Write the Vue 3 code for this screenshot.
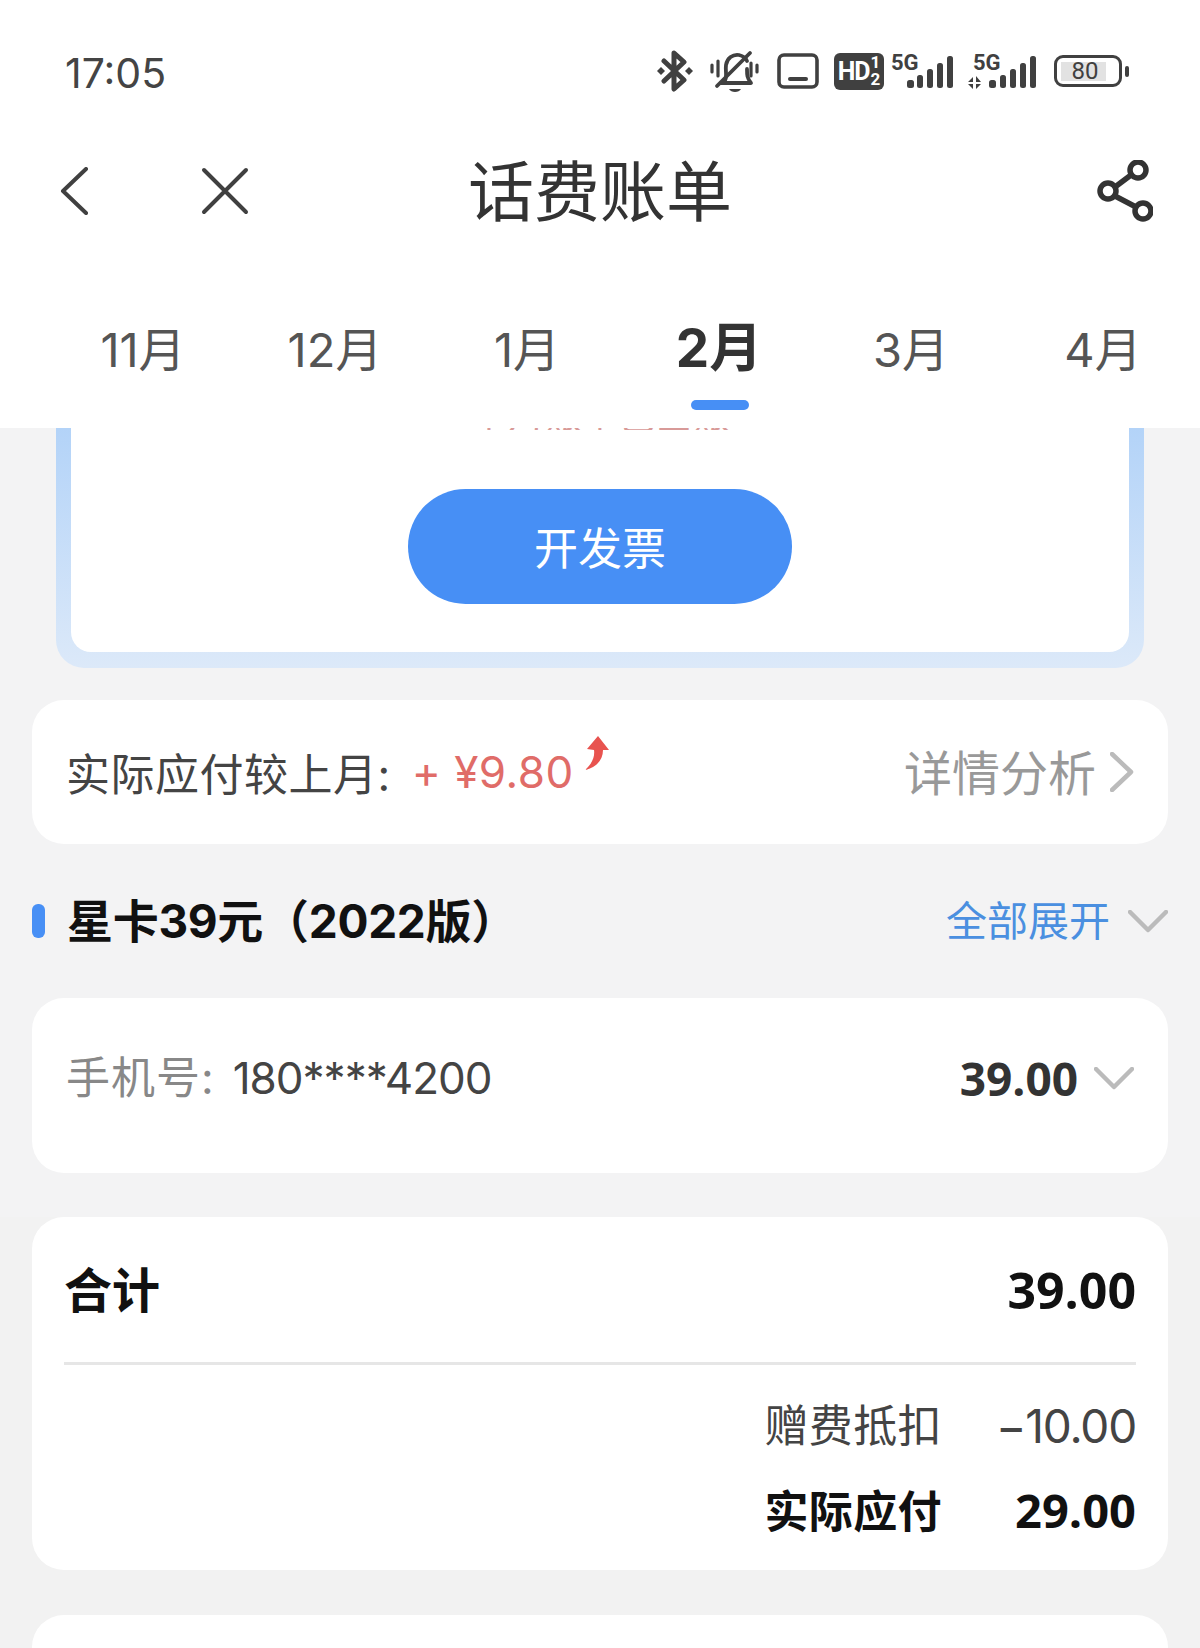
<script setup>
const months = [
  { label: "11月" },
  { label: "12月" },
  { label: "1月" },
  { label: "2月", active: true },
  { label: "3月" },
  { label: "4月" },
]
</script>

<template>
  <div class="page">
    <header class="top">
      <div class="status">
        <span class="time">17:05</span>
        <div class="status-icons">
          <svg class="ic-bt" viewBox="0 0 38 42" width="38" height="42">
            <path d="M8 11 L28 30 L18 39 V3 L28 12 L8 31" fill="none" stroke="#404040" stroke-width="5" stroke-linejoin="round" stroke-linecap="round"/>
            <path d="M1 21 l4 -4 l4 4 l-4 4z M29 21 l4 -4 l4 4 l-4 4z" fill="#404040"/>
          </svg>
          <svg class="ic-bell" viewBox="0 0 49 43" width="49" height="43">
            <path d="M14 32 C18 28 15 22 16 15 C17 8 23 4 29 5 C33 6 36 8 37 11 M37 19 C37 25 37 28 41 33 H11" fill="none" stroke="#404040" stroke-width="3.8" stroke-linejoin="round" stroke-linecap="round"/>
            <path d="M19 39 H31 C29 43 21 43 19 39z" fill="#404040"/>
            <path d="M7 36 L40 3" stroke="#404040" stroke-width="3.8" stroke-linecap="round"/>
            <path d="M2 15 V22 M8 11 V26 M41 13 V26 M47 15 V22" stroke="#404040" stroke-width="3.2" stroke-linecap="round"/>
          </svg>
          <svg class="ic-box" viewBox="0 0 42 36" width="42" height="36">
            <rect x="2" y="2" width="38" height="32" rx="5" fill="none" stroke="#404040" stroke-width="3.6"/>
            <rect x="11" y="24" width="20" height="4" rx="2" fill="#404040"/>
          </svg>
          <div class="hd">
            <span class="hd-big">HD</span>
            <span class="hd-small"><i>1</i><i>2</i></span>
          </div>
          <svg class="ic-sig" viewBox="0 0 64 36" width="64" height="36">
            <text x="0" y="17" class="five-g">5G</text>
            <rect x="16" y="27" width="7" height="8" rx="2.5" fill="#404040"/>
            <rect x="26" y="22" width="6" height="13" rx="2.5" fill="#404040"/>
            <rect x="36" y="16" width="6" height="19" rx="2.5" fill="#404040"/>
            <rect x="46" y="10" width="6" height="25" rx="2.5" fill="#404040"/>
            <rect x="56" y="3" width="6" height="32" rx="2.5" fill="#404040"/>
          </svg>
          <svg class="ic-sig" viewBox="0 0 70 36" width="70" height="36">
            <text x="5" y="17" class="five-g">5G</text>
            <path d="M0 29 H5 V24 Z M0 31 H5 V36 Z M8 23 V29 H13 Z M8 31 V36 L13 31 Z" fill="#404040"/>
            <rect x="21" y="27" width="7" height="8" rx="2.5" fill="#404040"/>
            <rect x="32" y="22" width="6" height="13" rx="2.5" fill="#404040"/>
            <rect x="42" y="16" width="6" height="19" rx="2.5" fill="#404040"/>
            <rect x="52" y="10" width="6" height="25" rx="2.5" fill="#404040"/>
            <rect x="62" y="3" width="6" height="32" rx="2.5" fill="#404040"/>
          </svg>
          <div class="battery">
            <div class="battery-body">
              <span class="battery-fill"></span>
              <span class="battery-num">80</span>
            </div>
            <span class="battery-nub"></span>
          </div>
        </div>
      </div>

      <nav class="nav">
        <svg class="nav-back" viewBox="0 0 30 48" width="30" height="48">
          <path d="M27 2 L4 24 L27 46" fill="none" stroke="#404040" stroke-width="4" stroke-linecap="round" stroke-linejoin="round"/>
        </svg>
        <svg class="nav-close" viewBox="0 0 48 48" width="48" height="48">
          <path d="M3 3 L45 45 M45 3 L3 45" fill="none" stroke="#404040" stroke-width="4" stroke-linecap="round"/>
        </svg>
        <h1 class="nav-title">话费账单</h1>
        <svg class="nav-share" viewBox="0 0 56 62" width="56" height="62">
          <g fill="none" stroke="#333" stroke-width="5.5">
            <circle cx="11" cy="31" r="8"/>
            <circle cx="41" cy="10" r="8"/>
            <circle cx="46" cy="51" r="8"/>
            <path d="M18 27 L34 15 M18 36 L39 47"/>
          </g>
        </svg>
      </nav>

      <div class="tabs">
        <div v-for="m in months" :key="m.label" class="tab" :class="{ active: m.active }">
          <span>{{ m.label }}</span>
          <i v-if="m.active" class="tab-line"></i>
        </div>
      </div>
    </header>

    <main class="content">
      <section class="invoice">
        <div class="invoice-inner">
          <div class="clipped"><span>本月账单已出账</span></div>
          <button class="invoice-btn">开发票</button>
        </div>
      </section>

      <section class="card compare">
        <div class="compare-left">
          <span>实际应付较上月:</span>
          <span class="diff">+ ¥9.80</span>
          <svg class="up" viewBox="0 0 26 36" width="26" height="36">
            <path d="M14 0 L25 14 L19 14 C19 24 12 32 1 34 C8 28 11 21 10 14 L3 13 Z" fill="#e8534f"/>
          </svg>
        </div>
        <div class="compare-right">
          <span>详情分析</span>
          <svg viewBox="0 0 24 40" width="24" height="40">
            <path d="M2 2 L21 20 L2 38" fill="none" stroke="#bbb" stroke-width="4.5" stroke-linecap="round" stroke-linejoin="round"/>
          </svg>
        </div>
      </section>

      <div class="plan">
        <div class="plan-left">
          <i class="plan-bar"></i>
          <h2>星卡39元（2022版）</h2>
        </div>
        <div class="plan-right">
          <span>全部展开</span>
          <svg viewBox="0 0 40 23" width="40" height="23">
            <path d="M2 2 L20 20 L38 2" fill="none" stroke="#bbb" stroke-width="4.5" stroke-linecap="round" stroke-linejoin="round"/>
          </svg>
        </div>
      </div>

      <section class="card phone">
        <div class="phone-left">
          <span class="phone-label">手机号:</span>
          <span class="phone-num">180****4200</span>
        </div>
        <div class="phone-right">
          <b>39.00</b>
          <svg viewBox="0 0 40 23" width="40" height="23">
            <path d="M2 2 L20 20 L38 2" fill="none" stroke="#bbb" stroke-width="4.5" stroke-linecap="round" stroke-linejoin="round"/>
          </svg>
        </div>
      </section>

      <section class="card total">
        <div class="total-head">
          <b class="total-label">合计</b>
          <b class="total-num">39.00</b>
        </div>
        <div class="total-rows">
          <div class="total-row">
            <span class="k">赠费抵扣</span>
            <span class="v">−10.00</span>
          </div>
          <div class="total-row strong">
            <span class="k">实际应付</span>
            <span class="v">29.00</span>
          </div>
        </div>
      </section>

      <section class="card more"></section>
    </main>
  </div>
</template>

<style>
html, body {
  margin: 0;
  background: #f3f3f4;
}
</style>

<style scoped>
.page {
  width: 1200px;
  height: 1648px;
  overflow: hidden;
  background: linear-gradient(#f3f3f4 1217px, #f2f2f2 1217px);
  font-family: "Inter", "Noto Sans CJK SC", "Noto Sans", sans-serif;
  color: #444;
}

.top {
  height: 428px;
  background: #fff;
  position: relative;
  z-index: 1;
}

.status {
  height: 144px;
  box-sizing: border-box;
  padding: 49px 70px 0 65px;
  display: flex;
  justify-content: space-between;
  align-items: flex-start;
}
.time {
  font-size: 41px;
  line-height: 48px;
  color: #444;
}
.status-icons {
  display: flex;
  align-items: center;
  height: 44px;
  margin-right: 1px;
}
.ic-bt { margin-right: 16px; }
.ic-bell { margin-right: 18px; }
.ic-box { margin-right: 15px; }
.ic-sig { margin-left: 7px; overflow: visible; }
.ic-sig + .ic-sig { margin-left: 13px; }
.five-g {
  font-family: "Roboto", sans-serif;
  font-size: 22px;
  font-weight: 700;
  fill: #404040;
}
.hd {
  width: 50px;
  height: 37px;
  background: #404040;
  border-radius: 6px;
  color: #fff;
  display: flex;
  align-items: center;
  justify-content: center;
  font-family: "Roboto", sans-serif;
  font-weight: 700;
}
.hd-big { font-size: 25px; letter-spacing: -1px; }
.hd-small {
  display: flex;
  flex-direction: column;
  font-size: 17px;
  line-height: 17px;
  margin-left: 1px;
}
.hd-small i { font-style: normal; }
.battery {
  display: flex;
  align-items: center;
  margin-left: 16px;
}
.battery-body {
  width: 68px;
  height: 32px;
  box-sizing: border-box;
  border: 3.5px solid #404040;
  border-radius: 9px;
  position: relative;
  padding: 3.5px;
}
.battery-fill {
  display: block;
  width: 45px;
  height: 100%;
  background: #e2e2e2;
}
.battery-num {
  position: absolute;
  left: 0;
  right: 6px;
  top: 0;
  text-align: center;
  font-family: "Roboto", sans-serif;
  font-size: 24px;
  line-height: 26px;
  color: #404040;
}
.battery-nub {
  width: 4px;
  height: 11px;
  background: #404040;
  border-radius: 2px;
  margin-left: 3px;
}

.nav {
  height: 96px;
  display: flex;
  align-items: center;
  position: relative;
}
.nav-back { margin-left: 59px; margin-top: -2px; }
.nav-close { margin-left: 112px; margin-top: -2px; }
.nav-title {
  margin: 0;
  position: absolute;
  left: 0;
  right: 0;
  top: 0;
  text-align: center;
  font-size: 66px;
  line-height: 96px;
  font-weight: 400;
  color: #333;
}
.nav-share {
  margin-left: auto;
  margin-right: 47px;
  margin-top: -2px;
  position: relative;
}

.tabs {
  display: flex;
  padding-left: 47px;
  margin-top: 57px;
}
.tab {
  width: 192px;
  height: 131px;
  position: relative;
  text-align: center;
  font-size: 47px;
  line-height: 64px;
  padding-top: 21px;
  box-sizing: border-box;
  color: #555;
}
.tab.active {
  font-size: 53px;
  font-weight: 700;
  padding-top: 19px;
  color: #333;
}
.tab-line {
  position: absolute;
  left: 50%;
  margin-left: -28px;
  top: 103px;
  width: 58px;
  height: 10px;
  border-radius: 5px;
  background: #478ff5;
}

.invoice {
  margin: 0 56px;
  height: 240px;
  box-sizing: border-box;
  padding: 0 15px 16px;
  background: linear-gradient(#b3d3f8, #dce9f9);
  border-radius: 0 0 28px 28px;
}
.invoice-inner {
  height: 224px;
  background: #fff;
  border-radius: 0 0 20px 20px;
  overflow: hidden;
  display: flex;
  flex-direction: column;
  align-items: center;
}
.clipped {
  height: 2px;
  overflow: hidden;
  font-size: 37px;
  line-height: 26px;
  color: #d89a98;
  display: flex;
  align-items: flex-end;
}
.invoice-btn {
  width: 384px;
  height: 115px;
  margin-top: 59px;
  border: 0;
  border-radius: 58px;
  background: #478ff5;
  color: #fff;
  font: inherit;
  font-size: 44px;
  padding-bottom: 3px;
}

.card {
  margin: 0 32px;
  background: #fff;
  border-radius: 32px;
  box-sizing: border-box;
}

.compare {
  margin-top: 32px;
  height: 144px;
  padding: 0 34px;
  display: flex;
  align-items: center;
  justify-content: space-between;
  font-size: 44px;
}
.compare-left {
  display: flex;
  align-items: center;
  position: relative;
  letter-spacing: 0.5px;
}
.diff {
  color: #e06c68;
  margin-left: 21px;
}
.up {
  position: absolute;
  right: -36px;
  top: -4px;
}
.compare-right {
  display: flex;
  align-items: center;
  gap: 14px;
  font-size: 48px;
  color: #999;
}
.compare-right span {
  margin-top: -4px;
}

.plan {
  margin: 0 32px;
  height: 154px;
  display: flex;
  align-items: center;
  justify-content: space-between;
}
.plan-left {
  display: flex;
  align-items: center;
}
.plan-bar {
  width: 13px;
  height: 34px;
  border-radius: 6px;
  background: #478ff5;
  margin-right: 22px;
}
.plan-left h2 {
  margin: 0 0 6px;
  font-size: 46px;
  font-weight: 700;
  letter-spacing: -0.3px;
  color: #111;
}
.plan-right {
  display: flex;
  align-items: center;
  gap: 18px;
  font-size: 41px;
  color: #4a8fe0;
}
.plan-right span {
  margin-top: -6px;
}

.phone {
  height: 175px;
  padding: 48px 34px 0;
  display: flex;
  justify-content: space-between;
  align-items: flex-start;
  font-size: 44px;
  line-height: 64px;
}
.phone-left {
  display: flex;
  gap: 18px;
}
.phone-label { color: #888; letter-spacing: 1px; }
.phone-num { color: #444; letter-spacing: -1px; }
.phone-right {
  display: flex;
  align-items: center;
  gap: 16px;
}
.phone-right b {
  font-family: "Open Sans", sans-serif;
  font-size: 46px;
  color: #333;
}

.total {
  margin-top: 44px;
  height: 353px;
  padding: 0 32px;
}
.total-head {
  height: 145px;
  border-bottom: 3px solid #e6e6e6;
  display: flex;
  justify-content: space-between;
  align-items: center;
  color: #111;
}
.total-label {
  font-size: 48px;
  margin-bottom: 6px;
}
.total-num {
  font-family: "Open Sans", sans-serif;
  font-size: 50px;
}
.total-rows {
  padding-top: 29px;
  display: flex;
  flex-direction: column;
  gap: 24px;
}
.total-row {
  display: flex;
  justify-content: flex-end;
  align-items: center;
  font-size: 44px;
  line-height: 64px;
  color: #444;
}
.total-row .k {
  letter-spacing: 0.4px;
}
.total-row .v {
  width: 194px;
  text-align: right;
  font-size: 46px;
  letter-spacing: -1.2px;
}
.total-row.strong {
  font-weight: 700;
  color: #111;
}
.total-row.strong .k {
  margin-top: -2px;
}
.total-row.strong .v {
  font-family: "Open Sans", sans-serif;
  font-size: 47px;
  letter-spacing: 0;
  margin-top: -6px;
}

.more {
  margin-top: 45px;
  height: 120px;
}
</style>
